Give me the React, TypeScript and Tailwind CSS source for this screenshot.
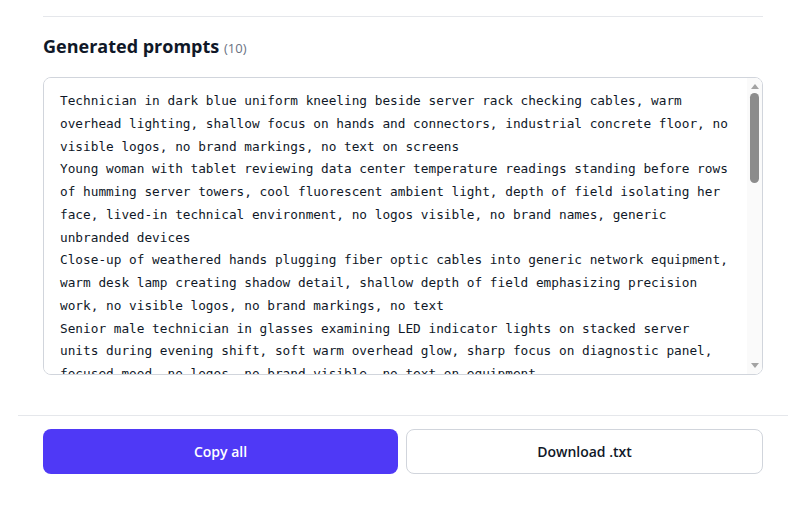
import React from 'react';

const prompts: string[] = [
    'Technician in dark blue uniform kneeling beside server rack checking cables, warm overhead lighting, shallow focus on hands and connectors, industrial concrete floor, no visible logos, no brand markings, no text on screens',
    'Young woman with tablet reviewing data center temperature readings standing before rows of humming server towers, cool fluorescent ambient light, depth of field isolating her face, lived-in technical environment, no logos visible, no brand names, generic unbranded devices',
    'Close-up of weathered hands plugging fiber optic cables into generic network equipment, warm desk lamp creating shadow detail, shallow depth of field emphasizing precision work, no visible logos, no brand markings, no text',
    'Senior male technician in glasses examining LED indicator lights on stacked server units during evening shift, soft warm overhead glow, sharp focus on diagnostic panel, focused mood, no logos, no brand visible, no text on equipment',
    'Two engineers discussing cooling layout in a narrow server aisle, blue ambient light from status LEDs, candid documentary framing, natural expressions, no logos, no readable text',
    'Overhead view of a cluttered workbench with labeled cable bundles, screwdrivers and a laptop with blank screen, soft window light, muted palette, no brand markings',
    'Female network engineer tracing patch cables in a wall-mounted rack, late afternoon sun through a small window, warm tones, shallow focus on her hands, no visible logos',
    'Wide shot of a quiet data hall at night, rows of cabinets lit by faint green indicators, long perspective lines, cinematic mood, no text, no brand names',
    'Apprentice technician taking notes on a clipboard beside an open server chassis, fluorescent light, realistic skin texture, no logos, no readable labels',
    'Maintenance crew replacing a cooling fan unit, gloved hands in focus, metal panels and cables in soft background blur, neutral daylight, no logos, no brand markings, no text',
];

// classic scrollbar look, drawn over the right edge of the textarea
const FakeScrollbar: React.FC = () => (
    <div className="pointer-events-none absolute top-px right-px bottom-px flex w-[15px] flex-col items-center rounded-r-lg bg-[#fafafa]">
        <svg width="8" height="5" viewBox="0 0 8 5" className="mt-[6px]">
            <path d="M4 0 L8 5 L0 5 Z" fill="#a3a3a3" />
        </svg>
        <div className="mt-[4px] h-[90px] w-[9px] rounded-full bg-[#8c8c8c]" />
        <div className="flex-1" />
        <svg width="8" height="5" viewBox="0 0 8 5" className="mb-[6px]">
            <path d="M0 0 L8 0 L4 5 Z" fill="#a3a3a3" />
        </svg>
    </div>
);

const App: React.FC = () => {
    const value = prompts.join('\n');

    return (
        <div className="min-h-screen w-[806px] bg-white" style={{ fontFamily: '"Open Sans", "Noto Sans", sans-serif' }}>
            <div className="px-[43px] pt-4">
                <div className="border-t border-gray-200" />
                <h2 className="mt-[15px] text-lg leading-7 font-bold text-gray-900">
                    Generated prompts <span className="text-[13px] leading-none font-normal text-gray-500">({prompts.length})</span>
                </h2>
                <div className="relative mt-[17px]">
                    <textarea
                        readOnly
                        value={value}
                        className="block h-[298px] w-full resize-none overflow-y-scroll rounded-lg border border-gray-300 bg-white py-3 pr-[31px] pl-4 text-[12.75px] leading-[22.75px] text-gray-900 [scrollbar-width:none] focus:outline-none"
                        style={{ fontFamily: '"DejaVu Sans Mono", "Liberation Mono", monospace' }}
                    />
                    <FakeScrollbar />
                </div>
            </div>
            <div className="mx-[18px] mt-10 border-t border-gray-200 px-[25px] pt-[13px]">
                <div className="flex gap-2">
                    <button className="h-[45px] flex-1 rounded-lg bg-indigo-600 text-sm font-semibold text-white">
                        Copy all
                    </button>
                    <button className="h-[45px] flex-1 rounded-lg border border-gray-300 bg-white text-sm font-semibold text-gray-900">
                        Download .txt
                    </button>
                </div>
            </div>
        </div>
    );
};

export default App;
